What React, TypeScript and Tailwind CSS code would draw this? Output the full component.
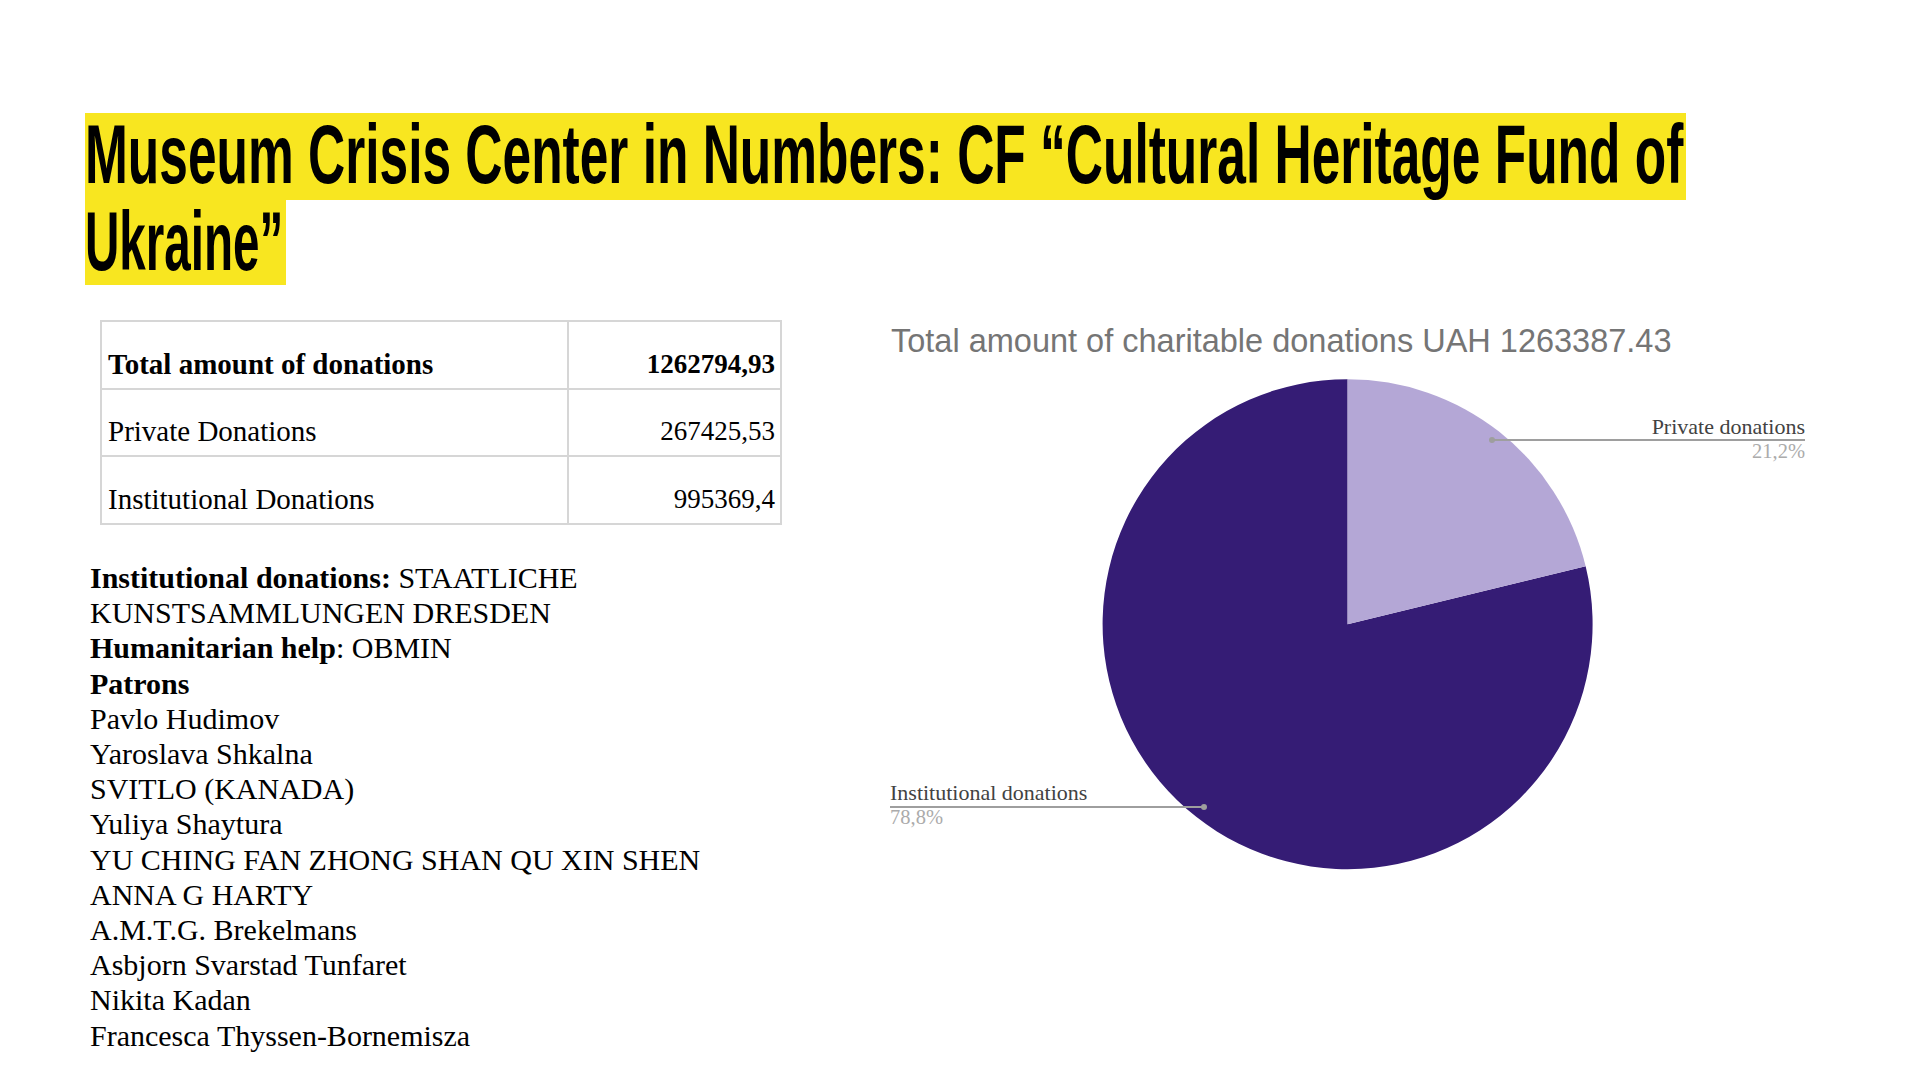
import React from "react";

const rows = [
	{ label: "Total amount of donations", value: "1262794,93", bold: true },
	{ label: "Private Donations", value: "267425,53", bold: false },
	{ label: "Institutional Donations", value: "995369,4", bold: false },
];

const patrons = [
	"Pavlo Hudimov",
	"Yaroslava Shkalna",
	"SVITLO (KANADA)",
	"Yuliya Shaytura",
	"YU CHING FAN ZHONG SHAN QU XIN SHEN",
	"ANNA G HARTY",
	"A.M.T.G. Brekelmans",
	"Asbjorn Svarstad Tunfaret",
	"Nikita Kadan",
	"Francesca Thyssen-Bornemisza",
];

const DonationsChart = () => {
	// pie centre and radius, in svg coordinates
	const cx = 467.6;
	const cy = 324.2;
	const r = 245;
	const angle = 0.212 * 2 * Math.PI;
	const ex = cx + r * Math.sin(angle);
	const ey = cy - r * Math.cos(angle);

	return (
		<svg width="960" height="600" viewBox="0 0 960 600" className="shrink-0">
			<text
				x="11"
				y="52"
				fontSize="32.5"
				fill="#757575"
				fontFamily="'Liberation Sans', Arial, sans-serif"
			>
				Total amount of charitable donations UAH 1263387.43
			</text>
			<path
				d={`M ${cx} ${cy} L ${ex} ${ey} A ${r} ${r} 0 1 1 ${cx} ${cy - r} Z`}
				fill="#351c75"
			/>
			<path
				d={`M ${cx} ${cy} L ${cx} ${cy - r} A ${r} ${r} 0 0 1 ${ex} ${ey} Z`}
				fill="#b4a7d6"
			/>

			<g fontFamily="'Liberation Serif', serif">
				<line x1="612" y1="140" x2="925" y2="140" stroke="#9e9e9e" strokeWidth="2" />
				<circle cx="612" cy="140" r="3" fill="#9e9e9e" />
				<text x="925" y="134" fontSize="22" fill="#424242" textAnchor="end">
					Private donations
				</text>
				<text x="925" y="158" fontSize="20.5" fill="#ababab" textAnchor="end">
					21,2%
				</text>

				<line x1="10" y1="507" x2="324" y2="507" stroke="#9e9e9e" strokeWidth="2" />
				<circle cx="324" cy="507" r="3" fill="#9e9e9e" />
				<text x="10" y="500" fontSize="22" fill="#424242">
					Institutional donations
				</text>
				<text x="10" y="524" fontSize="20.5" fill="#ababab">
					78,8%
				</text>
			</g>
		</svg>
	);
};

export default function App() {
	return (
		<div className="w-[1919px] h-[1079px] overflow-hidden bg-white text-black">
			<div className="pt-[113px] pl-[85px] font-['Liberation_Sans',Arial,sans-serif] font-bold text-[83px] leading-[87px]">
				<div className="w-[1601px] h-[87px] bg-[#f8e620]">
					<div className="w-max whitespace-nowrap origin-left scale-x-[0.62] -translate-y-[2px]">
						Museum Crisis Center in Numbers: CF “Cultural Heritage Fund of
					</div>
				</div>
				<div className="w-[201px] h-[85px] bg-[#f8e620]">
					<div className="w-max whitespace-nowrap origin-left scale-x-[0.573] -translate-y-[2px]">
						Ukraine”
					</div>
				</div>
			</div>

			<div className="mt-[15px] flex font-['Liberation_Serif',serif]">
				<div className="w-[880px] shrink-0 pl-[90px] pt-[20px]">
					<table className="ml-[10px] w-[682px] border-collapse text-[29px] leading-[30px]">
						<tbody>
							{rows.map((row, i) => (
								<tr key={row.label} className={i === 1 ? "h-[67px]" : "h-[68px]"}>
									<td
										className={`w-[467px] border-2 border-[#d6d6d6] px-[6px] pb-[9px] align-bottom ${row.bold ? "font-bold" : ""}`}
									>
										{row.label}
									</td>
									<td
										className={`border-2 border-[#d6d6d6] px-[5px] pb-[9px] text-right align-bottom text-[27px] ${row.bold ? "font-bold" : ""}`}
									>
										{row.value}
									</td>
								</tr>
							))}
						</tbody>
					</table>

					<div className="mt-[35px] text-[30px] leading-[35.2px]">
						<div>
							<span className="font-bold">Institutional donations:</span> STAATLICHE
						</div>
						<div>KUNSTSAMMLUNGEN DRESDEN</div>
						<div>
							<span className="font-bold">Humanitarian help</span>: OBMIN
						</div>
						<div className="font-bold">Patrons</div>
						{patrons.map((name) => (
							<div key={name}>{name}</div>
						))}
					</div>
				</div>

				<DonationsChart />
			</div>
		</div>
	);
}
